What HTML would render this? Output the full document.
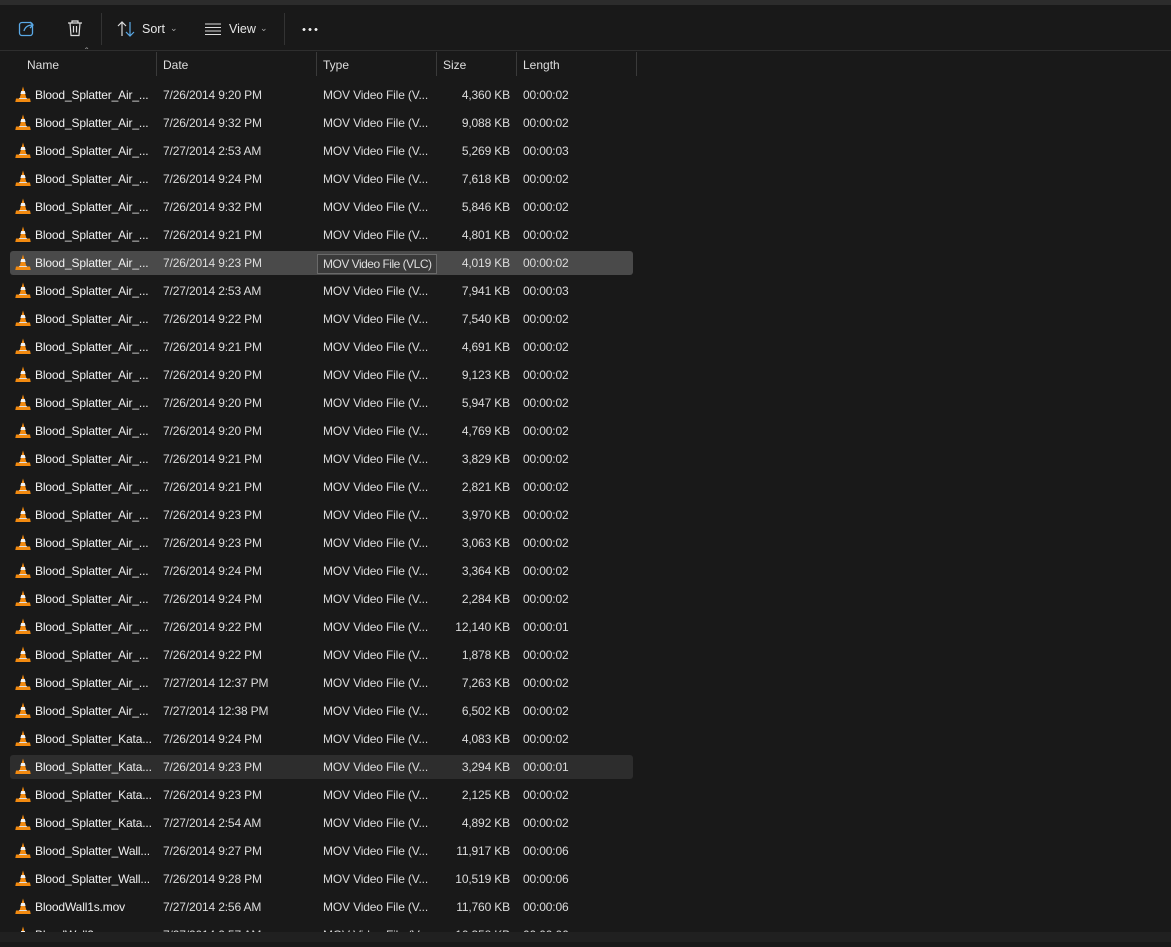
<!DOCTYPE html>
<html><head><meta charset="utf-8"><style>
*{margin:0;padding:0;box-sizing:border-box}
body{width:1171px;height:942px;background:#191919;font-family:"Liberation Sans",sans-serif;font-size:12px;color:#dcdcdc;position:relative;overflow:hidden}
.top{position:absolute;left:0;top:0;width:1171px;height:5px;background:#2c2c2c}
.tb{position:absolute;top:5px;left:0;width:1171px;height:46px;border-bottom:1px solid #2e2e2e}
.sep{position:absolute;top:8px;width:1px;height:32px;background:#333}
.tl{position:absolute;top:17px;font-size:12.5px;color:#e6e6e6}
.hd{position:absolute;top:58px;font-size:12px;color:#dedede}
.cs{position:absolute;top:52px;width:1px;height:24px;background:#3a3a3a}
.r{position:absolute;left:10px;width:623px;height:24px;border-radius:3px}
.r span{position:absolute;top:5px;white-space:nowrap;letter-spacing:-0.15px}
.n{left:25px;color:#f0f0f0}.d{left:153px}.t{left:313px}.s{right:123px}.l{left:513px}
.ic{position:absolute;left:5px;top:3px}
.bot{position:absolute;left:0;top:932px;width:1171px;height:10px;background:#202020}
</style></head><body>
<div class="top"></div>
<div class="tb">
<svg style="position:absolute;left:18px;top:14px" width="18" height="18" viewBox="0 0 18 18" fill="none" stroke="#5aa9e6" stroke-width="1.3"><rect x="1.5" y="3.5" width="13" height="13" rx="2.5"/><path d="M6 12c1-4 4-6 9-6M12 3l3 3-3 3"/></svg>
<svg style="position:absolute;left:67px;top:14px" width="16" height="18" viewBox="0 0 16 18" fill="none" stroke="#ddd" stroke-width="1.2"><path d="M1 4h14M5 4V2h6v2M3 4l1 12.5h8l1-12.5M6.5 7v6.5M9.5 7v6.5"/></svg>
<div class="sep" style="left:101px"></div>
<svg style="position:absolute;left:117px;top:16px" width="18" height="16" viewBox="0 0 18 16" fill="none" stroke-width="1.2"><path d="M5 15V1M1 5l4-4 4 4" stroke="#ddd"/><path d="M13 1v14M9 11l4 4 4-4" stroke="#5aa9e6"/></svg>
<div class="tl" style="left:142px">Sort</div>
<div class="tl" style="left:170px;font-size:9px;top:18px;color:#aaa">&#8964;</div>
<svg style="position:absolute;left:205px;top:18px" width="16" height="12" viewBox="0 0 16 12" stroke="#ddd" stroke-width="1.1"><path d="M0 1h16M0 4.5h16M0 8h16M0 11.5h16"/></svg>
<div class="tl" style="left:229px">View</div>
<div class="tl" style="left:260px;font-size:9px;top:18px;color:#aaa">&#8964;</div>
<div class="sep" style="left:284px"></div>
<div style="position:absolute;left:301px;top:23px;width:18px;height:3px;background:radial-gradient(circle,#eee 1.3px,transparent 1.6px) 0 0/6px 3px"></div>
</div>
<div class="hd" style="left:85px;top:47px;font-size:10px;color:#aaa">&#710;</div>
<div class="hd" style="left:27px">Name</div><div class="hd" style="left:163px">Date</div><div class="hd" style="left:323px">Type</div><div class="hd" style="left:443px">Size</div><div class="hd" style="left:523px">Length</div>
<div class="cs" style="left:156px"></div><div class="cs" style="left:316px"></div><div class="cs" style="left:436px"></div><div class="cs" style="left:516px"></div><div class="cs" style="left:636px"></div>
<div id="rows"></div>
<div class="bot"></div>
<script>
var D=[["Blood_Splatter_Air_...","7/26/2014 9:20 PM","4,360 KB","00:00:02"],
["Blood_Splatter_Air_...","7/26/2014 9:32 PM","9,088 KB","00:00:02"],
["Blood_Splatter_Air_...","7/27/2014 2:53 AM","5,269 KB","00:00:03"],
["Blood_Splatter_Air_...","7/26/2014 9:24 PM","7,618 KB","00:00:02"],
["Blood_Splatter_Air_...","7/26/2014 9:32 PM","5,846 KB","00:00:02"],
["Blood_Splatter_Air_...","7/26/2014 9:21 PM","4,801 KB","00:00:02"],
["Blood_Splatter_Air_...","7/26/2014 9:23 PM","4,019 KB","00:00:02"],
["Blood_Splatter_Air_...","7/27/2014 2:53 AM","7,941 KB","00:00:03"],
["Blood_Splatter_Air_...","7/26/2014 9:22 PM","7,540 KB","00:00:02"],
["Blood_Splatter_Air_...","7/26/2014 9:21 PM","4,691 KB","00:00:02"],
["Blood_Splatter_Air_...","7/26/2014 9:20 PM","9,123 KB","00:00:02"],
["Blood_Splatter_Air_...","7/26/2014 9:20 PM","5,947 KB","00:00:02"],
["Blood_Splatter_Air_...","7/26/2014 9:20 PM","4,769 KB","00:00:02"],
["Blood_Splatter_Air_...","7/26/2014 9:21 PM","3,829 KB","00:00:02"],
["Blood_Splatter_Air_...","7/26/2014 9:21 PM","2,821 KB","00:00:02"],
["Blood_Splatter_Air_...","7/26/2014 9:23 PM","3,970 KB","00:00:02"],
["Blood_Splatter_Air_...","7/26/2014 9:23 PM","3,063 KB","00:00:02"],
["Blood_Splatter_Air_...","7/26/2014 9:24 PM","3,364 KB","00:00:02"],
["Blood_Splatter_Air_...","7/26/2014 9:24 PM","2,284 KB","00:00:02"],
["Blood_Splatter_Air_...","7/26/2014 9:22 PM","12,140 KB","00:00:01"],
["Blood_Splatter_Air_...","7/26/2014 9:22 PM","1,878 KB","00:00:02"],
["Blood_Splatter_Air_...","7/27/2014 12:37 PM","7,263 KB","00:00:02"],
["Blood_Splatter_Air_...","7/27/2014 12:38 PM","6,502 KB","00:00:02"],
["Blood_Splatter_Kata...","7/26/2014 9:24 PM","4,083 KB","00:00:02"],
["Blood_Splatter_Kata...","7/26/2014 9:23 PM","3,294 KB","00:00:01"],
["Blood_Splatter_Kata...","7/26/2014 9:23 PM","2,125 KB","00:00:02"],
["Blood_Splatter_Kata...","7/27/2014 2:54 AM","4,892 KB","00:00:02"],
["Blood_Splatter_Wall...","7/26/2014 9:27 PM","11,917 KB","00:00:06"],
["Blood_Splatter_Wall...","7/26/2014 9:28 PM","10,519 KB","00:00:06"],
["BloodWall1s.mov","7/27/2014 2:56 AM","11,760 KB","00:00:06"],
["BloodWall2s.mov","7/27/2014 2:57 AM","10,358 KB","00:00:06"]];
var ic='<svg class="ic" width="16" height="17" viewBox="0 0 16 17"><path d="M8 0.5L4.5 12.5h7z" fill="#f28a10"/><path d="M6.2 5h3.6l.8 3H5.4z" fill="#f2f2f2"/><path d="M1 12.5h14l.7 3.5H.3z" fill="#f28a10"/><path d="M4.3 12h7.4l.3 1H4z" fill="#e0e0e0"/></svg>';
var h="";
D.forEach(function(r,i){
var bg=i==6?"background:#4a4a4a":(i==24?"background:#2d2d2d":"");
var t=i==6?'<span class="t" style="left:307px;top:3px;padding:2px 5px;border:1px solid #6a6a6a;background:#3a3a3a;letter-spacing:-0.5px">MOV Video File (VLC)</span>':'<span class="t">MOV Video File (V...</span>';
h+='<div class="r" style="top:'+(83+28*i)+'px;'+bg+'">'+ic+'<span class="n">'+r[0]+'</span><span class="d">'+r[1]+'</span>'+t+'<span class="s">'+r[2]+'</span><span class="l">'+r[3]+'</span></div>';
});
document.getElementById("rows").innerHTML=h;
</script>
</body></html>
